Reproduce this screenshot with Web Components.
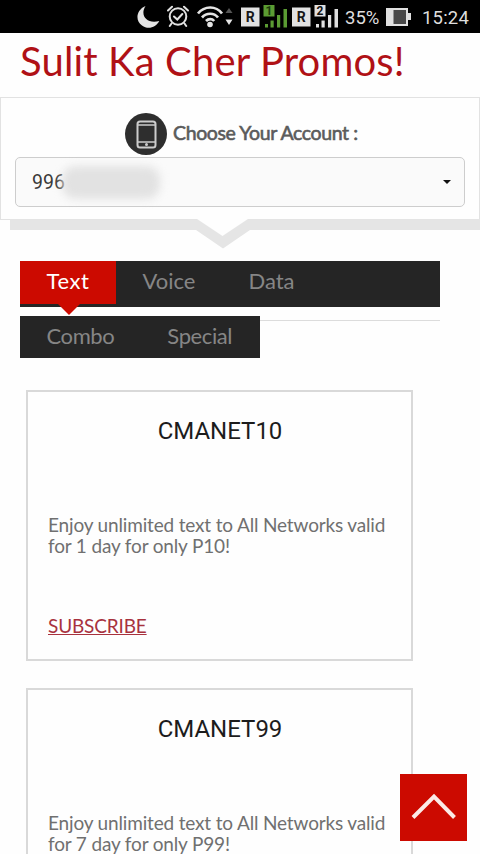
<!DOCTYPE html>
<html lang="en">
<head>
<meta charset="utf-8">
<title>Sulit Ka Cher Promos!</title>
<style>
  html, body {
    margin: 0;
    height: 854px;
    overflow: hidden;
    background: #fefefe;
    font-family: Lato, "Liberation Sans", sans-serif;
  }
</style>
</head>
<body>
<promo-app></promo-app>

<script>
class StatusBar extends HTMLElement {
  constructor() {
    super();
    this.shadowDOM = this.attachShadow({ mode: 'open' })
  }

  connectedCallback() {
    this.render();
  }

  render() {
    this.shadowDOM.innerHTML = `
      <style>
        :host {
          display: flex;
          align-items: center;
          box-sizing: border-box;
          height: 33px;
          padding-left: 137px;
          background: #000;
          color: #dedede;
          font: 18.5px Roboto, sans-serif;
          white-space: nowrap;
        }
        svg {
          flex: none;
          display: block;
        }
        text {
          font-family: Roboto, sans-serif;
          font-weight: 700;
        }
        .alarm { margin-left: 6px; }
        .wifi { margin-left: 7px; }
        .sim { margin-left: 7px; }
        .sim + .sim { margin-left: 4px; }
        .percent {
          width: 36px;
          margin: 2px 0 0 7px;
          letter-spacing: 0;
        }
        .battery { margin-left: 4px; }
        .time {
          margin: 2px 0 0 10px;
          letter-spacing: 0.2px;
        }
      </style>

      <svg class="moon" width="24" height="33" viewBox="0 0 24 33">
        <path d="M8.500 6C-1 10-2 21 5 25.500c6 4.500 14 2 17.300-4.500C10 24.500 2.500 15.500 8.500 6z" fill="#e4e4e4"/>
      </svg>
      <svg class="alarm" width="22" height="33" viewBox="0 0 22 33" fill="none" stroke="#e0e0e0" stroke-width="2" stroke-linecap="round">
        <circle cx="11" cy="16.500" r="8.300"/>
        <path d="M7 16.500l3.300 3 5-5.500M1 10.500l4-3.800M21 10.500l-4-3.800M4.500 23.500L2.800 26M17.500 23.500l1.700 2.500"/>
      </svg>
      <svg class="wifi" width="37" height="33" viewBox="0 0 37 33" fill="none" stroke="#e4e4e4" stroke-width="2.700">
        <path d="M2 13.500c6.500-8 18-8 24 0M6 17.500c4.500-5 12-5 16 0M10 21c2.500-2.600 6-2.600 8.200 0"/>
        <circle cx="14" cy="24.500" r="2.800" fill="#e4e4e4" stroke="none"/>
        <path d="M29.500 13l3.500-5 3.500 5z" fill="#555" stroke="none"/>
        <path d="M29.500 19.500h7L33 25z" fill="#e4e4e4" stroke="none"/>
      </svg>
      ${this.sim('1', '#5b9c33', '#1c3a0b')}
      ${this.sim('2', '#e0e0e0', '#111')}
      <span class="percent">35%</span>
      <svg class="battery" width="27" height="33" viewBox="0 0 27 33">
        <path d="M1 8h22v5h3v7h-3v6H1z" fill="#e0e0e0"/>
        <path d="M8.500 10H21v14H8.500z" fill="#484848"/>
      </svg>
      <span class="time">15:24</span>
      `
  }

  // roaming badge followed by the numbered signal bars
  sim(number, color, digit) {
    return `
      <svg class="sim" width="47" height="33" viewBox="0 0 47 33">
        <path d="M1 7.500h18.500V26.500H1z" fill="#e2e2e2"/>
        <text x="10.300" y="21.800" font-size="14" text-anchor="middle" fill="#181818">R</text>
        <path d="M25 24h3v3.500h-3zM30.500 20.500h3.200v7h-3.200zM37 15h3.200v12.500H37zM43.500 9H47v18.500h-3.500z" fill="${color}"/>
        <path d="M23.500 5h11v11.500h-11z" fill="${color}"/>
        <text x="29" y="15" font-size="12" text-anchor="middle" fill="${digit}">${number}</text>
      </svg>`
  }
}

customElements.define('status-bar', StatusBar)

class AccountPicker extends HTMLElement {
  constructor() {
    super();
    this.shadowDOM = this.attachShadow({ mode: 'open' })
  }

  connectedCallback() {
    this.render();
  }

  render() {
    this.shadowDOM.innerHTML = `
      <style>
        * {
          box-sizing: border-box;
        }
        :host {
          display: block;
          height: 152px;
        }
        .panel {
          height: 122px;
          padding: 14px 14px 0;
          background: #fefefe;
          border: 1px solid #e2e2e2;
          border-bottom: 0;
        }
        .label {
          display: flex;
          align-items: center;
          gap: 6px;
          height: 44px;
          padding-left: 110px;
          color: #5b5b5b;
          font-size: 19.500px;
          letter-spacing: -0.38px;
          -webkit-text-stroke: 0.6px #5b5b5b;
          white-space: nowrap;
        }
        .label span {
          margin-top: -4px;
        }
        .select {
          display: flex;
          align-items: center;
          height: 50px;
          margin-top: 1px;
          padding: 0 13px 0 16px;
          background: #fafafa;
          border: 1.500px solid #cdcdcd;
          border-radius: 5px;
          color: #3a3a3a;
          font: 19.500px Roboto, sans-serif;
        }
        .smudge {
          width: 98px;
          height: 33px;
          margin-left: -3px;
          border-radius: 14px;
          background: #e2e2e2;
          filter: blur(4px);
        }
        .caret {
          margin-left: auto;
          border: 4px solid transparent;
          border-top: 4.500px solid #111;
          border-bottom: 0;
        }
        .tail {
          display: block;
        }
      </style>

      <div class="panel">
        <div class="label">
          <svg width="42" height="42" viewBox="0 0 42 42">
            <circle cx="21" cy="21" r="21" fill="#2e2e2e"/>
            <rect x="12.500" y="8.500" width="18" height="26" rx="2.500" fill="none" stroke="#ccc" stroke-width="2"/>
            <path d="M12.500 12h18M12.500 29h18" stroke="#ccc" stroke-width="1.600"/>
            <circle cx="21.500" cy="31.600" r="1.500" fill="#ccc"/>
          </svg>
          <span>Choose Your Account :</span>
        </div>
        <div class="select">996<i class="smudge"></i><i class="caret"></i></div>
      </div>
      <svg class="tail" width="480" height="30" viewBox="0 0 480 30">
        <path d="M0 0h480v1H0z" fill="#e2e2e2"/>
        <path d="M10 .5h470v10.500H250L223 29.500 196 11H10z" fill="#e5e5e5"/>
        <path d="M197 0h51L222.500 17z" fill="#fefefe"/>
      </svg>
      `
  }
}

customElements.define('account-picker', AccountPicker)

class PromoTab extends HTMLElement {
  constructor() {
    super();
    this.shadowDOM = this.attachShadow({ mode: 'open' })
  }

  connectedCallback() {
    this.shadowDOM.innerHTML = `
      <style>
        :host {
          display: block;
          position: relative;
          box-sizing: border-box;
          height: 43px;
          padding: 0 26.500px;
          color: #868686;
          font-size: 22px;
          line-height: 39px;
          white-space: nowrap;
        }
        :host([active]) {
          background: #cc0a00;
          color: #fff;
          letter-spacing: 0.6px;
        }
        :host([slot="more"]) {
          letter-spacing: -0.4px;
        }
        :host([active])::after {
          content: "";
          position: absolute;
          top: 43px;
          left: 38px;
          border: 11px solid transparent;
          border-top-color: #cc0a00;
          border-bottom: 0;
        }
      </style>
      <slot></slot>
      `
  }
}

customElements.define('promo-tab', PromoTab)

class PromoTabs extends HTMLElement {
  constructor() {
    super();
    this.shadowDOM = this.attachShadow({ mode: 'open' })
  }

  connectedCallback() {
    this.shadowDOM.innerHTML = `
      <style>
        :host {
          display: block;
          margin: 12px 40px 0 20px;
        }
        .row {
          display: flex;
          height: 46px;
          background: #252525;
        }
        .wrap {
          display: flex;
          margin-top: 9px;
        }
        .wrap .row {
          width: 240px;
          height: 42px;
        }
        .rule {
          flex: 1;
          height: 1px;
          margin-top: 4px;
          background: #dcdcdc;
        }
      </style>
      <div class="row"><slot></slot></div>
      <div class="wrap">
        <div class="row"><slot name="more"></slot></div>
        <div class="rule"></div>
      </div>
      `
  }
}

customElements.define('promo-tabs', PromoTabs)

class PromoCard extends HTMLElement {
  constructor() {
    super();
    this.shadowDOM = this.attachShadow({ mode: 'open' })
  }

  connectedCallback() {
    this.shadowDOM.innerHTML = `
      <style>
        :host {
          display: block;
          flex: none;
          box-sizing: border-box;
          width: 387px;
          height: 271px;
          padding: 25px 20px 0;
          border: 2px solid #d9d9d9;
          color: #707070;
          font-size: 19px;
          line-height: 21px;
          letter-spacing: -0.16px;
        }
        h2 {
          margin: 0;
          padding-left: 1px;
          color: #1c1c1c;
          font: 24px/28px Roboto, sans-serif;
          letter-spacing: 0;
          text-align: center;
        }
        p {
          height: 42px;
          margin: 69px 0 0;
          white-space: nowrap;
        }
        a {
          display: inline-block;
          margin-top: 59px;
          color: #a8323e;
          text-decoration: underline;
        }
      </style>
      <h2><slot name="title"></slot></h2>
      <p><slot></slot></p>
      <a>SUBSCRIBE</a>
      `
  }
}

customElements.define('promo-card', PromoCard)

class BackToTop extends HTMLElement {
  constructor() {
    super();
    this.shadowDOM = this.attachShadow({ mode: 'open' })
  }

  connectedCallback() {
    this.shadowDOM.innerHTML = `
      <style>
        :host {
          display: block;
          position: absolute;
          left: 400px;
          top: 774px;
          width: 67px;
          height: 67px;
          background: #cc0a00;
        }
        svg {
          display: block;
        }
      </style>
      <svg width="67" height="67" viewBox="0 0 67 67">
        <path d="M13 43.500L34 22.500 54.500 43.500" fill="none" stroke="#fbeae6" stroke-width="4"/>
      </svg>
      `
  }
}

customElements.define('back-to-top', BackToTop)

class PromoApp extends HTMLElement {
  constructor() {
    super();
    this.shadowDOM = this.attachShadow({ mode: 'open' })
  }

  connectedCallback() {
    this.render();
  }

  render() {
    this.shadowDOM.innerHTML = `
      <style>
        :host {
          display: block;
          position: relative;
          width: 480px;
          height: 854px;
          overflow: hidden;
        }
        h1 {
          height: 64px;
          margin: 0;
          padding-left: 20px;
          box-sizing: border-box;
          color: #b01116;
          font-size: 40px;
          font-weight: 400;
          letter-spacing: 0.15px;
          line-height: 56px;
          white-space: nowrap;
        }
        .cards {
          display: flex;
          flex-direction: column;
          gap: 27px;
          padding: 32px 0 0 26px;
        }
      </style>

      <status-bar></status-bar>
      <h1>Sulit Ka Cher Promos!</h1>
      <account-picker></account-picker>
      <promo-tabs>
        <promo-tab active>Text</promo-tab>
        <promo-tab>Voice</promo-tab>
        <promo-tab>Data</promo-tab>
        <promo-tab slot="more">Combo</promo-tab>
        <promo-tab slot="more">Special</promo-tab>
      </promo-tabs>
      <div class="cards">
        <promo-card>
          <span slot="title">CMANET10</span>
          Enjoy unlimited text to All Networks valid<br>for 1 day for only P10!
        </promo-card>
        <promo-card>
          <span slot="title">CMANET99</span>
          Enjoy unlimited text to All Networks valid<br>for 7 day for only P99!
        </promo-card>
      </div>
      <back-to-top></back-to-top>
      `
  }
}

customElements.define('promo-app', PromoApp)
</script>
</body>
</html>
